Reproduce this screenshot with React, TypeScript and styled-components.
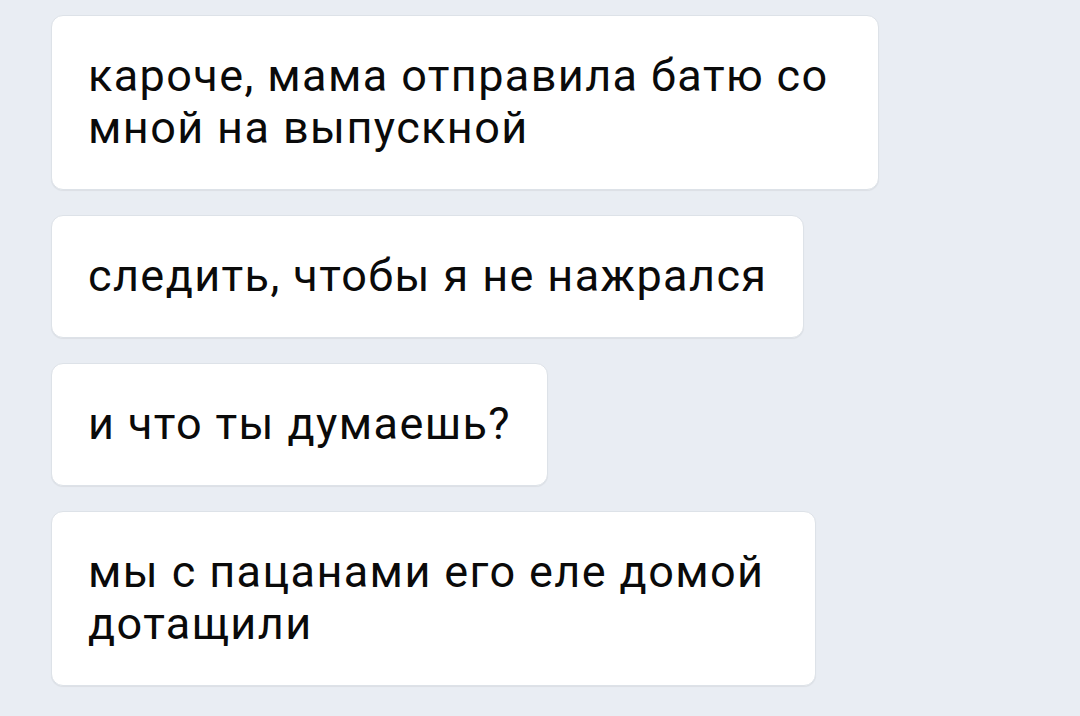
import styled, { createGlobalStyle } from "styled-components";

const GlobalStyle = createGlobalStyle`
  html, body {
    margin: 0;
    padding: 0;
    background: #e9edf3;
  }
  body {
    font-family: Roboto, "Noto Sans", sans-serif;
  }
`;

const messages = [
  { text: "кароче, мама отправила батю со мной на выпускной", width: 828 },
  { text: "следить, чтобы я не нажрался" },
  { text: "и что ты думаешь?" },
  { text: "мы с пацанами его еле домой дотащили", width: 765 },
];

export default function App() {
  return (
    <>
      <GlobalStyle />
      <Feed>
        {messages.map((m, i) => (
          <Bubble key={i} $width={m.width}>
            {m.text}
          </Bubble>
        ))}
      </Feed>
    </>
  );
}

const Feed = styled.div`
  display: flex;
  flex-direction: column;
  align-items: flex-start;
  gap: 25px;
  padding: 15px 0 0 51px;
  width: 1080px;
  height: 716px;
  box-sizing: border-box;
  overflow: hidden;
`;

const Bubble = styled.div<{ $width?: number }>`
  box-sizing: border-box;
  width: ${(p) => (p.$width ? `${p.$width}px` : "auto")};
  max-width: 828px;
  padding: 34px 36px 35px 36px;
  background: #ffffff;
  border: 1px solid #dde2e8;
  border-radius: 12px;
  box-shadow: 0 1px 1px rgba(0, 0, 0, 0.06);
  color: #0a0a0a;
  font-size: 45px;
  letter-spacing: 1.4px;
  line-height: 52px;
`;
